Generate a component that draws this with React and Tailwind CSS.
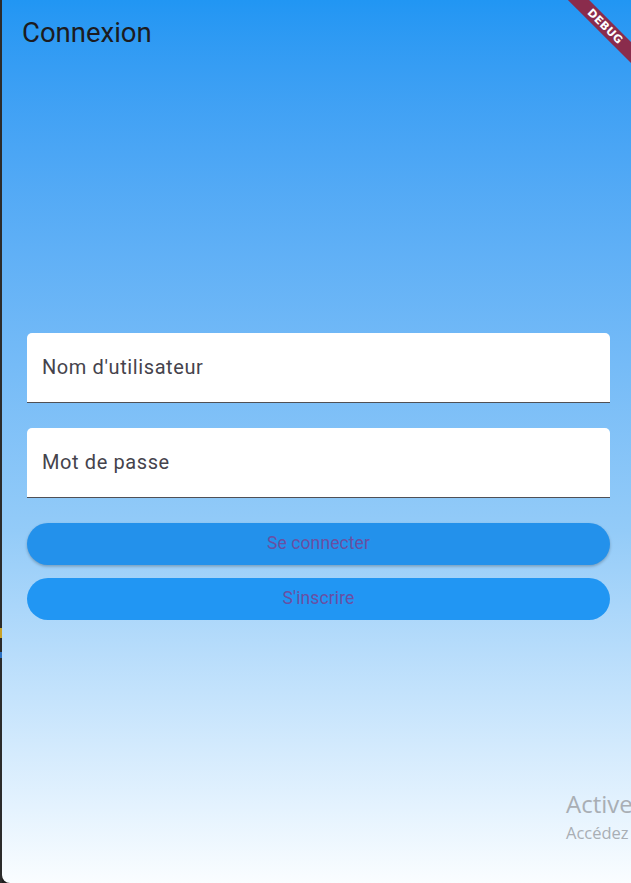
import React, { useState } from "react";

const roboto = { fontFamily: "Roboto, 'Noto Sans', sans-serif" };

const Field = ({ label, type = "text" }) => {
    const [value, setValue] = useState("");
    return (
        <label className="relative block h-[70px] rounded-t-[5px] bg-white border-b-[1.5px] border-[#505055]">
            <input
                type={type}
                value={value}
                onChange={(e) => setValue(e.target.value)}
                placeholder={label}
                className="h-full w-full bg-transparent px-[15px] text-[20px] tracking-[0.6px] text-[#45434c] placeholder:text-[#45434c] outline-none"
                style={roboto}
            />
        </label>
    );
};

export default function App() {
    return (
        <div className="flex h-[883px] w-[631px] overflow-hidden bg-[#1f1f1f]">
            {/* bord gauche de la fenêtre */}
            <div className="flex w-[2px] shrink-0 flex-col bg-[#2b2b2b]">
                <div className="h-[628px]" />
                <div className="h-[10px] bg-[#c9a227]" />
                <div className="h-[14px]" />
                <div className="h-[6px] bg-[#2a6fc0]" />
            </div>

            <div className="relative flex flex-1 flex-col overflow-hidden rounded-bl-[8px] bg-gradient-to-b from-[#2196f3] via-[#93cbf8] via-60% to-[#fafdff]">
                {/* AppBar */}
                <div className="flex h-[70px] shrink-0 items-center px-5">
                    <h1 className="-mt-[5px] text-[27.5px] text-[#1c1b20]" style={roboto}>
                        Connexion
                    </h1>
                </div>

                {/* Formulaire */}
                <div className="flex flex-1 flex-col justify-center pb-[1px] pl-[25px] pr-[21px]">
                    <div className="flex flex-col gap-[25px]">
                        <Field label="Nom d'utilisateur" />
                        <Field label="Mot de passe" type="password" />
                    </div>
                    <div className="mt-[25px] flex flex-col gap-[13px]">
                        <button
                            className="h-[42px] rounded-full bg-[#2391eb] text-[17.5px] tracking-[0.1px] text-[#6a4fa3] shadow-[0_1.5px_3px_rgba(0,0,0,0.25)]"
                            style={roboto}
                        >
                            Se connecter
                        </button>
                        <button
                            className="h-[42px] rounded-full bg-[#2196f3] text-[17.5px] tracking-[0.1px] text-[#6a4fa3]"
                            style={roboto}
                        >
                            S'inscrire
                        </button>
                    </div>
                </div>

                {/* Filigrane Windows */}
                <div
                    className="absolute left-[564px] top-[788px] whitespace-nowrap text-[#a9aeb4]"
                    style={{ fontFamily: "'Open Sans', 'Noto Sans', sans-serif" }}
                >
                    <div className="text-[24px] leading-[32px]">Activer Windows</div>
                    <div className="mt-[1px] text-[16.5px] leading-[24px]">Accédez aux paramètres pour activer Windows.</div>
                </div>

                {/* Bannière DEBUG */}
                <div className="absolute left-[543px] top-[19px] flex h-[15px] w-[120px] rotate-45 items-center justify-center bg-[#8a2c4c]">
                    <span
                        className="text-[11px] font-bold leading-none tracking-[0.3px] text-white"
                        style={{ fontFamily: "'DejaVu Sans', sans-serif" }}
                    >
                        DEBUG
                    </span>
                </div>
            </div>
        </div>
    );
}
